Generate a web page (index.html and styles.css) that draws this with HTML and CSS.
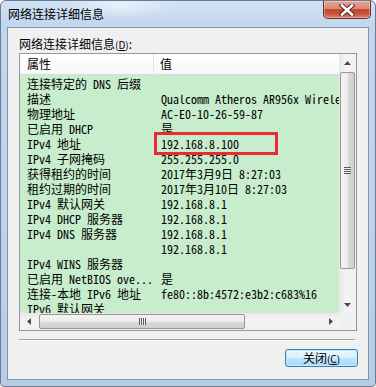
FILE: index.html
```html
<!DOCTYPE html>
<html lang="zh-CN">
<head>
<meta charset="UTF-8">
<title>网络连接详细信息</title>
<link rel="stylesheet" href="styles.css">
</head>
<body>
<div class="window">
  <div class="titlebar">
    <span class="title">网络连接详细信息</span>
    <span class="close-btn">
      <svg width="16" height="12" viewBox="0 0 16 12">
        <path d="M3 1.5 L13 10.5 M13 1.5 L3 10.5" stroke="#5a2a24" stroke-width="4.6" stroke-linecap="square"/>
        <path d="M3 1.5 L13 10.5 M13 1.5 L3 10.5" stroke="#fff" stroke-width="2.6" stroke-linecap="square"/>
      </svg>
    </span>
  </div>

  <div class="client">
    <div class="caption">网络连接详细信息<span class="key">(<u>D</u>)</span>:</div>

    <div class="listbox">
      <div class="list-main">
        <div class="list-head">
          <div class="col-name">属性</div>
          <div class="col-value">值</div>
        </div>
        <div class="list-body">
          <div class="row"><span class="c-name">连接特定的 DNS 后缀</span><span class="c-value"></span></div>
          <div class="row"><span class="c-name">描述</span><span class="c-value">Qualcomm Atheros AR956x Wireless Network Adapter</span></div>
          <div class="row"><span class="c-name">物理地址</span><span class="c-value">AC-E0-10-26-59-87</span></div>
          <div class="row"><span class="c-name">已启用 DHCP</span><span class="c-value">是</span></div>
          <div class="row"><span class="c-name">IPv4 地址</span><span class="c-value mark">192.168.8.100</span></div>
          <div class="row"><span class="c-name">IPv4 子网掩码</span><span class="c-value">255.255.255.0</span></div>
          <div class="row"><span class="c-name">获得租约的时间</span><span class="c-value">2017年3月9日 8:27:03</span></div>
          <div class="row"><span class="c-name">租约过期的时间</span><span class="c-value">2017年3月10日 8:27:03</span></div>
          <div class="row"><span class="c-name">IPv4 默认网关</span><span class="c-value">192.168.8.1</span></div>
          <div class="row"><span class="c-name">IPv4 DHCP 服务器</span><span class="c-value">192.168.8.1</span></div>
          <div class="row"><span class="c-name">IPv4 DNS 服务器</span><span class="c-value">192.168.8.1</span></div>
          <div class="row"><span class="c-name"></span><span class="c-value">192.168.8.1</span></div>
          <div class="row"><span class="c-name">IPv4 WINS 服务器</span><span class="c-value"></span></div>
          <div class="row"><span class="c-name">已启用 NetBIOS ove...</span><span class="c-value">是</span></div>
          <div class="row"><span class="c-name">连接-本地 IPv6 地址</span><span class="c-value">fe80::8b:4572:e3b2:c683%16</span></div>
          <div class="row"><span class="c-name">IPv6 默认网关</span><span class="c-value"></span></div>
        </div>
      </div>

      <div class="vscroll">
        <div class="sb-btn"><svg width="7" height="4" viewBox="0 0 7 4"><path d="M0 4 L3.5 0 L7 4 Z" fill="#4a4a4a"/></svg></div>
        <div class="sb-track">
          <div class="thumb-v"><span class="grip-v"></span></div>
        </div>
        <div class="sb-btn"><svg width="7" height="4" viewBox="0 0 7 4"><path d="M0 0 L7 0 L3.5 4 Z" fill="#4a4a4a"/></svg></div>
      </div>

      <div class="hscroll">
        <div class="sb-btn"><svg width="4" height="7" viewBox="0 0 4 7"><path d="M4 0 L4 7 L0 3.5 Z" fill="#4a4a4a"/></svg></div>
        <div class="sb-track">
          <div class="thumb-h"><span class="grip-h"></span></div>
        </div>
        <div class="sb-btn"><svg width="4" height="7" viewBox="0 0 4 7"><path d="M0 0 L4 3.5 L0 7 Z" fill="#4a4a4a"/></svg></div>
      </div>

      <div class="corner"></div>
    </div>

    <div class="sep"></div>

    <div class="actions">
      <button class="btn">关闭<span class="key">(<u>C</u>)</span></button>
    </div>
  </div>
</div>
</body>
</html>
```

FILE: styles.css
```css
body {
    margin: 0;
    width: 376px;
    height: 387px;
    overflow: hidden;
    background: #fff;
    font-family: "Noto Sans CJK SC", sans-serif;
    font-size: 12px;
    color: #000;
}

.window {
    box-sizing: border-box;
    width: 376px;
    height: 387px;
    border: 1px solid #6b7c92;
    border-radius: 6px 6px 4px 4px;
    display: flex;
    flex-direction: column;
    background:
        radial-gradient(ellipse 60px 14px at 120px 4px, rgba(255,255,255,0.55), rgba(255,255,255,0)),
        linear-gradient(to bottom, #cfe1f4 0, #c1d7ee 26px, #bcd3eb 60%, #b6cde6 100%);
}

.titlebar {
    height: 26px;
    display: flex;
    align-items: flex-start;
    flex-shrink: 0;
}

.title {
    margin: 5px 0 0 7px;
    line-height: 16px;
    color: #000;
}

.close-btn {
    margin-left: auto;
    margin-right: 4px;
    box-sizing: border-box;
    width: 48px;
    height: 18px;
    border: 1px solid #6d2b22;
    border-top: none;
    border-radius: 0 0 5px 5px;
    display: flex;
    align-items: center;
    justify-content: center;
    background: linear-gradient(to bottom, #e8a595 0%, #d98673 45%, #c24a32 50%, #c2503a 72%, #dc8168 100%);
    box-shadow: inset 0 0 0 1px rgba(255,255,255,0.35);
}

.client {
    flex: 1;
    margin: 0 6px 6px 6px;
    border: 1px solid #8293aa;
    background: #f0f0f0;
    padding: 0 11px;
    display: flex;
    flex-direction: column;
}

.caption {
    margin-top: 8px;
    line-height: 16px;
    height: 16px;
}

.key {
    font-size: 10px;
}

.listbox {
    margin-top: 1px;
    box-sizing: border-box;
    height: 278px;
    border: 1px solid #8f9aa6;
    display: grid;
    grid-template-columns: 1fr 17px;
    grid-template-rows: 1fr 17px;
    overflow: hidden;
}

.list-main {
    grid-column: 1;
    grid-row: 1;
    overflow: hidden;
    display: flex;
    flex-direction: column;
    background: #c7edcc;
}

.list-head {
    display: flex;
    height: 20px;
    flex-shrink: 0;
    line-height: 20px;
    background: linear-gradient(to bottom, #ffffff, #f6f7f9);
    border-bottom: 1px solid #d8dde3;
}

.col-name {
    box-sizing: border-box;
    width: 134px;
    padding-left: 7px;
    border-right: 1px solid #e2e6eb;
}

.col-value {
    padding-left: 6px;
}

.list-body {
    padding-top: 1px;
    font-family: "Noto Sans Mono CJK SC", "Liberation Mono", monospace;
    font-size: 12px;
}

.row {
    display: flex;
    height: 15px;
    line-height: 15px;
    white-space: nowrap;
}

.c-name {
    box-sizing: border-box;
    width: 135px;
    flex-shrink: 0;
    padding-left: 7px;
}

.c-value {
    padding-left: 6px;
}

.mark {
    position: relative;
}

.mark::after {
    content: "";
    position: absolute;
    left: -1px;
    top: -4px;
    width: 124px;
    height: 23px;
    box-sizing: border-box;
    border: 3px solid #ec2b2e;
}

.vscroll {
    grid-column: 2;
    grid-row: 1;
    display: flex;
    flex-direction: column;
    background: linear-gradient(to right, #e8e8e8, #f4f4f4 40%, #f0f0f0);
}

.hscroll {
    grid-column: 1;
    grid-row: 2;
    display: flex;
    background: linear-gradient(to bottom, #e8e8e8, #f4f4f4 40%, #f0f0f0);
}

.sb-btn {
    width: 17px;
    height: 17px;
    flex-shrink: 0;
    display: flex;
    align-items: center;
    justify-content: center;
}

.sb-track {
    flex: 1;
    display: flex;
}

.vscroll .sb-track {
    flex-direction: column;
}

.thumb-v {
    box-sizing: border-box;
    margin: 1px 0 0 1px;
    width: 15px;
    height: 197px;
    border: 1px solid #979797;
    border-radius: 2px;
    background: linear-gradient(to right, #f3f3f3, #ececec 50%, #dcdcdc 51%, #cfcfcf);
    display: flex;
    align-items: center;
    justify-content: center;
}

.grip-v {
    width: 7px;
    height: 7px;
    background: repeating-linear-gradient(to bottom, #5a5a5a 0, #5a5a5a 1px, #f0f0f0 1px, #f0f0f0 2px);
}

.thumb-h {
    box-sizing: border-box;
    margin: 1px 0 0 2px;
    width: 206px;
    height: 15px;
    border: 1px solid #979797;
    border-radius: 2px;
    background: linear-gradient(to bottom, #f3f3f3, #ececec 50%, #dcdcdc 51%, #cfcfcf);
    display: flex;
    align-items: center;
    justify-content: center;
}

.grip-h {
    width: 7px;
    height: 7px;
    background: repeating-linear-gradient(to right, #5a5a5a 0, #5a5a5a 1px, #f0f0f0 1px, #f0f0f0 2px);
}

.corner {
    grid-column: 2;
    grid-row: 2;
    background: #f0f0f0;
}

.sep {
    margin: 8px 2px 0 0;
    height: 1px;
    background: #a0a0a0;
    border-bottom: 1px solid #fff;
}

.actions {
    display: flex;
    justify-content: flex-end;
    margin-top: 8px;
}

.btn {
    box-sizing: border-box;
    width: 73px;
    height: 18px;
    padding: 0;
    margin-right: -1px;
    border: 1px solid #3c7fb1;
    border-radius: 3px;
    font-family: "Noto Sans CJK SC", sans-serif;
    font-size: 12px;
    line-height: 16px;
    color: #000;
    background: linear-gradient(to bottom, #eaf6fd 0%, #d9f0fc 50%, #bee6fd 51%, #a7d9f5 100%);
    box-shadow: inset 0 0 0 1px #c8e8fb;
}
```
